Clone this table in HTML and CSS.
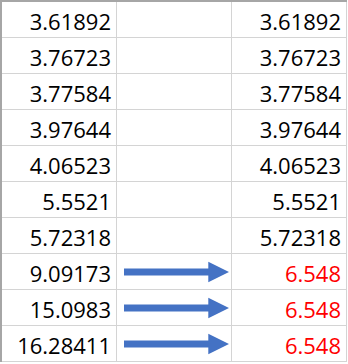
FILE: index.html
```html
<!DOCTYPE html>
<html>
<head>
<meta charset="utf-8">
<link rel="stylesheet" href="styles.css">
</head>
<body>
<div class="sheet">
  <div class="cell">3.61892</div><div class="cell"></div><div class="cell">3.61892</div>
  <div class="cell">3.76723</div><div class="cell"></div><div class="cell">3.76723</div>
  <div class="cell">3.77584</div><div class="cell"></div><div class="cell">3.77584</div>
  <div class="cell">3.97644</div><div class="cell"></div><div class="cell">3.97644</div>
  <div class="cell">4.06523</div><div class="cell"></div><div class="cell">4.06523</div>
  <div class="cell">5.5521</div><div class="cell"></div><div class="cell">5.5521</div>
  <div class="cell">5.72318</div><div class="cell"></div><div class="cell">5.72318</div>
  <div class="cell">9.09173</div>
  <div class="cell arrow-cell"><svg class="arrow" viewBox="0 0 114 35" width="114" height="35"><path d="M7 14.5 H91.3 V7.7 L112 18 L91.3 28.3 V21.5 H7 Z"/></svg></div>
  <div class="cell red">6.548</div>
  <div class="cell">15.0983</div>
  <div class="cell arrow-cell"><svg class="arrow" viewBox="0 0 114 35" width="114" height="35"><path d="M7 14.5 H91.3 V7.7 L112 18 L91.3 28.3 V21.5 H7 Z"/></svg></div>
  <div class="cell red">6.548</div>
  <div class="cell">16.28411</div>
  <div class="cell arrow-cell"><svg class="arrow" viewBox="0 0 114 35" width="114" height="35"><path d="M7 14.5 H91.3 V7.7 L112 18 L91.3 28.3 V21.5 H7 Z"/></svg></div>
  <div class="cell red">6.548</div>
</div>
</body>
</html>
```
FILE: styles.css
```css
html, body {
  margin: 0;
  padding: 0;
  background: #ffffff;
}
.sheet {
  display: grid;
  grid-template-columns: 115px 115px 115px;
  width: fit-content;
  border-top: 2px solid #a6a6a6;
  border-left: 2px solid #a6a6a6;
  font-family: "Open Sans", "Liberation Sans", sans-serif;
  font-size: 22px;
  line-height: 22px;
  color: #000000;
}
.cell {
  box-sizing: border-box;
  height: 36px;
  border-right: 1px solid #d4d4d4;
  border-bottom: 1px solid #d4d4d4;
  text-align: right;
  padding: 8px 5px 0 0;
  white-space: nowrap;
  overflow: hidden;
}
.arrow-cell {
  padding: 0;
}
.arrow {
  display: block;
}
.arrow path {
  fill: #4472c4;
}
.red {
  color: #ff0000;
}
```
